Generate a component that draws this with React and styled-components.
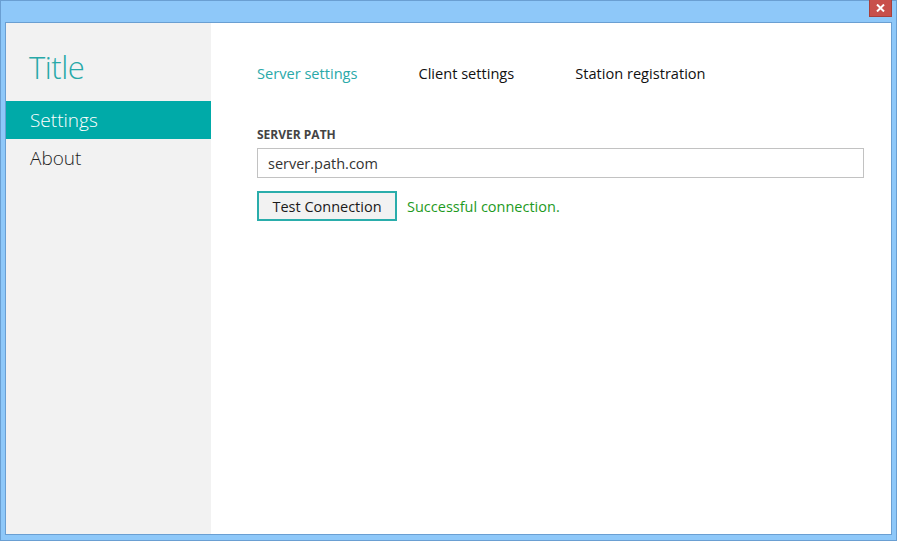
import React, { useState } from "react";
import styled, { createGlobalStyle } from "styled-components";

const GlobalStyle = createGlobalStyle`
  html, body {
    margin: 0;
    padding: 0;
    background: #ffffff;
  }
  body {
    font-family: "Segoe UI", "Open Sans", "Noto Sans", sans-serif;
  }
`;

const tabs = ["Server settings", "Client settings", "Station registration"];
const menu = ["Settings", "About"];

const App = () => {
  const [tab, setTab] = useState(0);
  const [page, setPage] = useState(0);

  return (
    <>
      <GlobalStyle />
      <Window>
        <CloseButton aria-label="Close">
          <svg width="9" height="8" viewBox="0 0 9 8">
            <path d="M1 0.5 L8 7.5 M8 0.5 L1 7.5" stroke="#ffffff" strokeWidth="2" />
          </svg>
        </CloseButton>
        <Client>
          <Sidebar>
            <AppTitle>Title</AppTitle>
            {menu.map((item, i) => (
              <MenuItem key={item} $active={i === page} onClick={() => setPage(i)}>
                {item}
              </MenuItem>
            ))}
          </Sidebar>
          <Content>
            <Tabs>
              {tabs.map((item, i) => (
                <Tab key={item} $active={i === tab} onClick={() => setTab(i)}>
                  {item}
                </Tab>
              ))}
            </Tabs>
            <Label>SERVER PATH</Label>
            <TextInput defaultValue="server.path.com" />
            <ActionRow>
              <Button>Test Connection</Button>
              <Status>Successful connection.</Status>
            </ActionRow>
          </Content>
        </Client>
      </Window>
    </>
  );
};

const Window = styled.div`
  position: relative;
  box-sizing: border-box;
  width: 897px;
  height: 541px;
  display: flex;
  padding: 21px 4px 5px 4px;
  background: #8ec8f9;
  border: 1px solid #6a9fd2;
`;

const CloseButton = styled.button`
  position: absolute;
  top: -1px;
  right: 4px;
  box-sizing: border-box;
  width: 23px;
  height: 17px;
  padding: 0;
  display: flex;
  align-items: center;
  justify-content: center;
  background: #c8504b;
  border: 1px solid #a8403c;
  border-top: none;
  cursor: pointer;
`;

const Client = styled.div`
  flex: 1;
  display: flex;
  background: #ffffff;
  border: 1px solid #6a9fd2;
`;

const Sidebar = styled.nav`
  width: 205px;
  display: flex;
  flex-direction: column;
  background: #f2f2f2;
`;

const AppTitle = styled.h1`
  margin: 0;
  padding: 25px 0 15px 23px;
  font-size: 31px;
  font-weight: 300;
  letter-spacing: -0.5px;
  color: #27a8a8;
  line-height: 38px;
`;

const MenuItem = styled.div`
  height: 38px;
  padding-left: 24px;
  display: flex;
  align-items: center;
  font-size: 19px;
  font-weight: 300;
  color: ${(p) => (p.$active ? "#ffffff" : "#1e1e1e")};
  background: ${(p) => (p.$active ? "#00aaa8" : "transparent")};
  cursor: pointer;
`;

const Content = styled.main`
  flex: 1;
  display: flex;
  flex-direction: column;
  padding: 38px 27px 0 46px;
`;

const Tabs = styled.div`
  display: flex;
  gap: 61px;
  margin-bottom: 42px;
`;

const Tab = styled.div`
  font-size: 14.6px;
  line-height: 24px;
  color: ${(p) => (p.$active ? "#2aa9a9" : "#111111")};
  cursor: pointer;
`;

const Label = styled.div`
  font-size: 12px;
  font-weight: 700;
  color: #444444;
  line-height: 16px;
  margin-bottom: 5px;
`;

const TextInput = styled.input`
  box-sizing: border-box;
  width: 100%;
  height: 30px;
  padding: 0 10px;
  font-family: inherit;
  font-size: 14.5px;
  color: #333333;
  border: 1px solid #c2c2c2;
  outline: none;
`;

const ActionRow = styled.div`
  display: flex;
  align-items: center;
  gap: 10px;
  margin-top: 13px;
`;

const Button = styled.button`
  box-sizing: border-box;
  width: 140px;
  height: 30px;
  padding: 0;
  font-family: inherit;
  font-size: 14.5px;
  color: #1a1a1a;
  background: #f2f2f2;
  border: 2px solid #2aadab;
  cursor: pointer;
`;

const Status = styled.span`
  font-size: 14.5px;
  color: #1e9a1e;
`;

export default App;
